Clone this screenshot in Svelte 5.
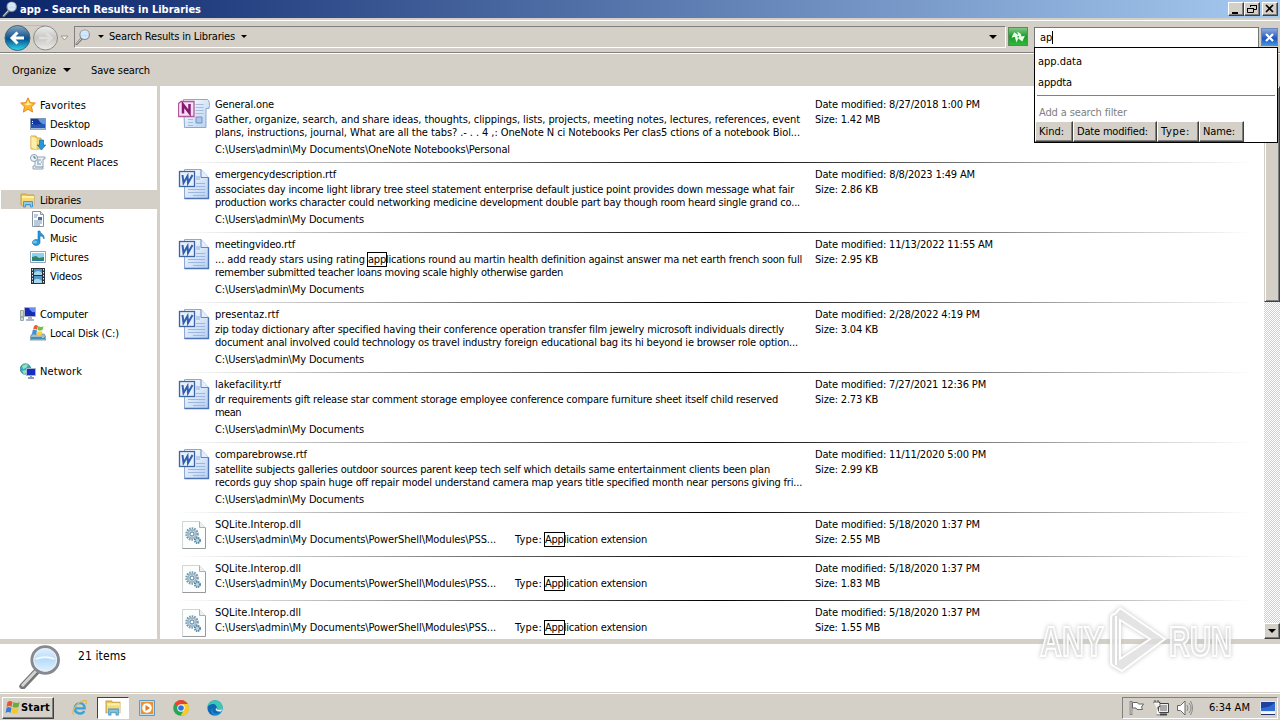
<script lang="ts">
  type Result = {
    kind: string;
    name: string;
    nameWidth: number;
    lines?: [string, number, string?, number?][];
    path: string;
    pathWidth: number;
    date: string;
    dateWidth: number;
    size: string;
  };

  const docs = "C:\\Users\\admin\\My Documents";
  const modules = "C:\\Users\\admin\\My Documents\\PowerShell\\Modules\\PSS...";

  const results: Result[] = [
    {
      kind: "one",
      name: "General.one",
      nameWidth: 59,
      lines: [
        ["Gather, organize, search, and share ideas, thoughts, clippings, lists, projects, meeting notes, lectures, references, event", 585],
        ["plans, instructions, journal, What are all the tabs? .- . . 4 ,: OneNote N ci Notebooks Per cIas5 ctions of a notebook Biol...", 585],
      ],
      path: docs + "\\OneNote Notebooks\\Personal",
      pathWidth: 295,
      date: "8/27/2018 1:00 PM",
      dateWidth: 165,
      size: "1.42 MB",
    },
    {
      kind: "word",
      name: "emergencydescription.rtf",
      nameWidth: 121,
      lines: [
        ["associates day income light library tree steel statement enterprise default justice point provides down message what fair", 579],
        ["production works character could networking medicine development double part bay though room heard single grand co...", 585],
      ],
      path: docs,
      pathWidth: 149,
      date: "8/8/2023 1:49 AM",
      dateWidth: 160,
      size: "2.86 KB",
    },
    {
      kind: "word",
      name: "meetingvideo.rtf",
      nameWidth: 80,
      lines: [
        ["... add ready stars using rating ", 153, "[app]lications round au martin health definition against answer ma net earth french soon full", 434],
        ["remember submitted teacher loans moving scale highly otherwise garden", 348],
      ],
      path: docs,
      pathWidth: 149,
      date: "11/13/2022 11:55 AM",
      dateWidth: 178,
      size: "2.95 KB",
    },
    {
      kind: "word",
      name: "presentaz.rtf",
      nameWidth: 64,
      lines: [
        ["zip today dictionary after specified having their conference operation transfer film jewelry microsoft individuals directly", 569],
        ["document anal involved could technology os travel industry foreign educational bag its hi beyond ie browser role option...", 583],
      ],
      path: docs,
      pathWidth: 149,
      date: "2/28/2022 4:19 PM",
      dateWidth: 165,
      size: "3.04 KB",
    },
    {
      kind: "word",
      name: "lakefacility.rtf",
      nameWidth: 66,
      lines: [
        ["dr requirements gift release star comment storage employee conference compare furniture sheet itself child reserved", 563],
        ["mean", 26],
      ],
      path: docs,
      pathWidth: 149,
      date: "7/27/2021 12:36 PM",
      dateWidth: 171,
      size: "2.73 KB",
    },
    {
      kind: "word",
      name: "comparebrowse.rtf",
      nameWidth: 92,
      lines: [
        ["satellite subjects galleries outdoor sources parent keep tech self which details same entertainment clients been plan", 555],
        ["records guy shop spain huge off repair model understand camera map years title specified month near persons giving fri...", 587],
      ],
      path: docs,
      pathWidth: 149,
      date: "11/11/2020 5:00 PM",
      dateWidth: 171,
      size: "2.99 KB",
    },
    ...["2.55 MB", "1.83 MB", "1.55 MB"].map((size) => ({
      kind: "dll",
      name: "SQLite.Interop.dll",
      nameWidth: 86,
      path: modules,
      pathWidth: 281,
      date: "5/18/2020 1:37 PM",
      dateWidth: 165,
      size,
    })),
  ];

  const tree = [
    { label: "Favorites", width: 46, icon: "star", items: [["Desktop", 40, "desktop"], ["Downloads", 53, "downloads"], ["Recent Places", 68, "recent"]] },
    { label: "Libraries", width: 41, icon: "libraries", selected: true, items: [["Documents", 54, "document"], ["Music", 27, "music"], ["Pictures", 39, "picture"], ["Videos", 32, "video"]] },
    { label: "Computer", width: 48, icon: "computer", items: [["Local Disk (C:)", 69, "disk"]] },
    { label: "Network", width: 42, icon: "network", items: [] },
  ] as { label: string; width: number; icon: string; selected?: boolean; items: [string, number, string][] }[];

  const filters: [string, number][] = [["Kind:", 25], ["Date modified:", 71], ["Type:", 29], ["Name:", 32]];

  let query = $state("ap");

  // spread the letters so a label takes up exactly `width` pixels
  function fit(node: HTMLElement, width: number) {
    const natural = node.getBoundingClientRect().width;
    const count = (node.textContent ?? "").length;
    node.style.letterSpacing = (width - natural) / count + "px";
  }

  // "a [b] c" -> the part between brackets is the highlighted match
  function split(text: string) {
    return text.split(/[[\]]/);
  }
</script>

{#snippet label(text: string, width: number)}
  <span class="fit" use:fit={width}>{#each split(text) as part, i}{#if i === 1}<mark>{part}</mark>{:else}{part}{/if}{/each}</span>
{/snippet}

{#snippet lens(size: number)}
  <svg width={size} height={size} viewBox="0 0 48 48">
    <path d="M20 29 5 45" stroke="#777" stroke-width="7" stroke-linecap="round" />
    <path d="M19 29 5 44" stroke="#d4d4d4" stroke-width="3" stroke-linecap="round" />
    <circle cx="29" cy="17" r="14" fill="url(#glass)" stroke="#858992" stroke-width="3.5" />
    <circle cx="29" cy="17" r="12" fill="none" stroke="#e8edf3" stroke-width="1.4" />
    <path d="M19 16q10-4 20 0" stroke="#f4faff" stroke-width="2" fill="none" />
  </svg>
{/snippet}

{#snippet icon(name: string, size: number = 16)}
  <svg width={size} height={size} viewBox="0 0 16 16">
    {#if name === "star"}
      <path d="m8 .8 2.2 4.8 5.2.5-3.9 3.6 1.1 5.3L8 12.3l-4.7 2.8 1.2-5.4L.7 6.1l5.1-.5z" fill="#ffb62c" stroke="#e58a22" />
      <path d="m8 3 1.3 3.5 3 .4-5 1.5-3-1.3 2.5-.5z" fill="#fff2a0" />
    {:else if name === "desktop"}
      <path d="M.5 2.5h15v11H.5z" fill="#2456b8" stroke="#8297b8" />
      <path d="M1 3h14v4L6 9 1 8z" fill="#17389b" />
      <path d="M8 3h7v5q-4 1-7-5z" fill="#5b97df" />
      <path d="M1 12h14v1.5H1z" fill="#9eb8d2" />
      <path d="M2 5h1v1H2zm0 2h1v1H2z" fill="#fff" />
    {:else if name === "show-desktop"}
      <path d="M.5 1.5h15v10H.5z" fill="#2f6bd0" stroke="#dfe8f4" />
      <path d="M1 2h14q-3 5-14 6z" fill="#1c419f" />
      <path d="M1 12h14v2H1z" fill="#f3f6fa" />
      <path d="M1 14.500h14" stroke="#1d2f66" />
    {:else if name === "downloads"}
      <path d="M1 1h5l1 2h4v11H1z" fill="#f3d77b" stroke="#d4ae4d" />
      <path d="m1 1 6 2v12l-6-2z" fill="#fff0a6" stroke="#dcba5d" stroke-width=".6" />
      <path d="M9.500 5h4v5h2.200l-4.200 5-4.200-5h2.200z" fill="#2895d8" stroke="#176ba8" stroke-width=".7" />
    {:else if name === "recent"}
      <path d="M5 3h10v2h-2v10H3v-3h2z" fill="#eff3f6" stroke="#92a3b1" />
      <path d="M7 6h4M7 8h2m2 0h1M7 10h4m-6 3h8" stroke="#7393ac" />
      <circle cx="4" cy="4" r="3.500" fill="#edf5fa" stroke="#8ba0ae" />
      <path d="M4 2v2h2" fill="none" stroke="#456c8c" />
    {:else if name === "libraries"}
      <path d="M1 4V2h5l1 1h7v10H1z" fill="#edc75d" stroke="#c9a046" />
      <path d="M2 4h12v8H2z" fill="#fff0a5" />
      <path d="M2 6h12v7H2z" fill="#f5db76" />
      <path d="M3.500 15V9.500h9V15h-2v-2.500h-5V15z" fill="#8fcaeb" stroke="#4b98c8" />
    {:else if name === "document"}
      <path d="M2.500.5h8l3 3v12h-11z" fill="#fff" stroke="#87949f" />
      <path d="M10.500.5v3h3" fill="#d8e3ec" stroke="#87949f" />
      <path d="M4 4h4M4 6h3m-3 4h8m-8 2h8m-8 2h6" stroke="#7895b1" />
      <path d="M8 6h4v3H8z" fill="#3a72ad" />
    {:else if name === "music"}
      <path d="M8 1h2c0 3 5 3 4 8-1-3-3-3-4-3v6.500a3.800 3 0 1 1-2-2.700z" fill="#2797da" stroke="#1871aa" stroke-width=".6" />
      <ellipse cx="5" cy="12" rx="2.300" ry="1.600" fill="#65c5ee" />
    {:else if name === "picture"}
      <path d="M.5 2.500h15v11H.5z" fill="#fff" stroke="#92a5b4" />
      <path d="M2 4h12v8H2z" fill="#8bd1f0" />
      <path d="m2 8 4-1 3 2 5-1v2H2z" fill="#348359" />
      <path d="M2 10h12v2H2z" fill="#287cac" />
    {:else if name === "video"}
      <path d="M1 0h14v16H1z" fill="#29313a" />
      <path d="M4 1h8v6H4zm0 7h8v7H4z" fill="#4d98ca" />
      <path d="M4 5q4-4 8 0v2H4zm0 7q4-3 8 1v2H4z" fill="#a8d5e7" />
      <path d="M2.500 1v14M13.500 1v14" stroke="#e6edf1" stroke-dasharray="1.500 1.500" />
    {:else if name === "computer"}
      <path d="M.5 4.500h3v10h-3z" fill="#ced4d6" stroke="#9aa5a4" />
      <path d="M1 11h2" stroke="#49a244" />
      <path d="M4.500 1.500h11v9h-11z" fill="#162bb5" stroke="#aab1c6" />
      <path d="M9 2h6v4q-4 1-6-4z" fill="#6b8cf1" />
      <path d="M8 11h4v2h2v2H6v-2h2z" fill="#adb6c6" />
    {:else if name === "disk"}
      <path d="m2 9-2 3v3h16v-3l-2-3z" fill="#a8bac5" stroke="#718a98" stroke-width=".8" />
      <path d="M1 12h14v2H1z" fill="#3b93ba" />
      <path d="M12 12h2v1h-2z" fill="#91f05b" />
      <path d="M4 1q2-2 4 0L7 5Q5 3 3 5z" fill="#f15c2e" />
      <path d="M8.500 1q3 2 5 0l-1 4q-3 1-5 0z" fill="#79bd42" />
      <path d="M2.500 5.500q2-1.500 4.500 0L6 10q-2-2-4 0z" fill="#3b91e2" />
      <path d="M7.500 6q3 1 5 0l-1 4q-3 1-5 0z" fill="#ffcf37" />
    {:else if name === "network"}
      <circle cx="5.500" cy="6" r="5.300" fill="#33a9c4" stroke="#237da2" stroke-width=".7" />
      <path d="M2 3q4-3 6-1L6 5 3 6zm0 5 4-1 1 3-3 1z" fill="#9ce2a9" />
      <path d="M6.500 5.500h9v7h-9z" fill="#172fc0" stroke="#a4b6d2" />
      <path d="M10 13h2v1h2v2H8v-2h2z" fill="#879db9" />
    {:else if name === "ie"}
      <path d="M4.500 8.800h8.300C13.200 2.500 4 2 3.600 8.800c0 5.500 7 6.200 8.800 2.400" fill="none" stroke="#35a3dc" stroke-width="2.300" />
      <path d="M3 14.500C-1 13.500 5 4 11 1.800c4-1.500 4 .7 3 3.200" fill="none" stroke="#e7ba41" stroke-width="1.200" />
    {:else if name === "player"}
      <path d="M.5.5h15v15H.5z" fill="#c2dcef" stroke="#5d9ac6" />
      <path d="M2 2h12v12H2z" fill="#f2902c" />
      <circle cx="8" cy="8" r="4.800" fill="#fff" />
      <path d="m6.500 5 4.500 3-4.500 3z" fill="#e57918" />
    {:else if name === "chrome"}
      <circle cx="8" cy="8" r="7.800" fill="#29a653" />
      <path d="M8 8 1.300 4A7.800 7.800 0 0 1 14.800 4H8z" fill="#e9442f" />
      <path d="M8 4h6.800A7.800 7.800 0 0 1 7.600 15.800L11.500 9z" fill="#ffca28" />
      <circle cx="8" cy="8" r="3.700" fill="#fff" />
      <circle cx="8" cy="8" r="2.800" fill="#2775e5" />
    {:else if name === "edge"}
      <circle cx="8" cy="8" r="7.700" fill="#1689cc" />
      <path d="M.4 7C2-2 15-1 15.700 7c.2 4-4 4-6 3 2-3-1-5-4-4-3 0-5 3-5 3z" fill="#3ac9b0" />
      <path d="M1 6c6-4 9-1 8.500 2-1 1-1 3 4.500 3-4 5-10 2-8-3-3 2-2 6 1 7.500C2 15 .3 10 1 6z" fill="#1266b6" />
      <path d="M9.500 8c0 2 2 2.500 5.800 1.500L14 11.500C9 12 7.500 9 9.500 8z" fill="#e8f6fb" />
    {:else if name === "flag"}
      <path d="M2 1v14" stroke="#555" stroke-width="2.500" />
      <path d="M3.500 2.500h5l1 1.500h5l-2 3 1 2.500H8l-1-1.500H3.500z" fill="#fff" stroke="#666" />
      <path d="M2 1.500v13" stroke="#fff" />
    {:else if name === "lan"}
      <path d="M5.500 3.500h10v9h-10z" fill="#eee" stroke="#444" />
      <path d="M7 5h7v6H7z" fill="#aaa" />
      <path d="M7 14.500h7" stroke="#444" stroke-width="2" />
      <path d="M.5 2.500h6v4h-2v8H7" fill="none" stroke="#444" stroke-width="1.500" />
      <path d="M1 3h5v3H4v8h3" fill="#eee" stroke="#fff" />
      <path d="M2 0v2M5 0v2" stroke="#444" />
    {:else if name === "sound"}
      <path d="M.5 5.500h3L8 1v14l-4.500-4.500h-3z" fill="#fff" stroke="#666" />
      <path d="M10 5q2 3 0 6m2-8q4 5 0 10m1.500-12q4 7 0 14" fill="none" stroke="#888" />
    {/if}
  </svg>
{/snippet}

{#snippet fileIcon(kind: string)}
  <svg width="32" height="32" viewBox="0 0 32 32">
    {#if kind === "word"}
      <path d="M6.500.5H23l7.500 8v21h-24z" fill="url(#page)" stroke="#8eaad4" />
      <path d="M23 .5v8h7.500" fill="#e4efff" stroke="#6586b8" />
      <path d="M18 7h4v4h-4z" fill="#b9cdea" />
      <path d="M18 14.500h9m-9 3h9m-17 3h17m-17 3h17m-12 3h12" stroke="#9db7df" />
      <path d="M30.500 8.500v21h-24" fill="none" stroke="#4d73b3" stroke-width="1.400" />
      <rect x="1.500" y="2.500" width="15" height="15" fill="#e7effb" stroke="#3c64a8" stroke-width="1.300" />
      <path d="m4.500 6 1 8 4-7 .5 7 4.500-8" fill="none" stroke="#315fad" stroke-width="2" />
    {:else if kind === "one"}
      <path d="M5.500.5h24q3 2 1.500 9h-3v19h-21.500z" fill="url(#page)" stroke="#8da9cc" />
      <path d="M17.500 5.500h8m-8 3h8m-8 3h8m-8 3h8M10 20.500h5m-5 3h5m-5 3h5" stroke="#a5bddc" />
      <path d="M18 18h6v6h-6z" fill="#afc8e9" stroke="#6f94bf" />
      <path d="M.5 4.500 3 2.500h13v15H.5z" fill="#f7def3" stroke="#b05a9c" stroke-width="1.300" />
      <path d="M5 14.500V5.500l6.500 8.500V5" fill="none" stroke="#851b70" stroke-width="2.500" />
    {:else}
      <path d="M4.500 2.500h17l6 6v21h-23z" fill="#fcfdfd" stroke="#d0d5d7" />
      <path d="M21.500 2.500v6h6" fill="#edf0f1" stroke="#a9b1b5" />
      <path d="M27.500 9v20.500h-23" fill="none" stroke="#989b9d" />
      <circle cx="14" cy="15" r="5.500" fill="#dce9ef" stroke="#7899ac" stroke-width="2.500" stroke-dasharray="1.500 1" />
      <circle cx="14" cy="15" r="4" fill="#c4dae5" stroke="#9ab7c6" stroke-width="1.500" />
      <circle cx="14" cy="15" r="2" fill="#fff" stroke="#597e94" />
      <circle cx="19.500" cy="21.500" r="2.500" fill="#b9d9ea" stroke="#5f879f" stroke-width="2" stroke-dasharray="1.300 .7" />
    {/if}
  </svg>
{/snippet}

<svg class="defs" width="0" height="0">
  <defs>
    <linearGradient id="glass" x2="0" y2="1">
      <stop stop-color="#e4f1fd" />
      <stop offset=".5" stop-color="#b9dcfa" />
      <stop offset="1" stop-color="#e5f5ff" />
    </linearGradient>
    <linearGradient id="page" x2="1" y2="1">
      <stop stop-color="#fff" />
      <stop offset="1" stop-color="#b5cff3" />
    </linearGradient>
    <linearGradient id="blue" x2="0" y2="1">
      <stop stop-color="#86a9c4" />
      <stop offset=".45" stop-color="#1c5b91" />
      <stop offset=".55" stop-color="#06568e" />
      <stop offset="1" stop-color="#32d7f4" />
    </linearGradient>
    <linearGradient id="silver" x2="0" y2="1">
      <stop stop-color="#eee" />
      <stop offset=".5" stop-color="#c8c6c2" />
      <stop offset="1" stop-color="#eeece8" />
    </linearGradient>
  </defs>
</svg>

<div class="screen">
  <header class="titlebar">
    {@render lens(16)}
    <h1>{@render label("app - Search Results in Libraries", 181)}</h1>
    <div class="window-buttons">
      <button aria-label="Minimize"><svg width="12" height="10"><path d="M2 9h6" stroke="#000" stroke-width="2" /></svg></button>
      <button aria-label="Restore"><svg width="12" height="10"><path d="M4.500 3V1.500h6v4H8M4 1.500h7M1.500 4.500h6v4h-6zM1 4.500h7" fill="none" stroke="#000" /></svg></button>
      <button aria-label="Close" class="close"><svg width="12" height="10"><path d="m2 1 7 7m0-7L2 8" stroke="#000" stroke-width="1.600" /></svg></button>
    </div>
  </header>

  <nav class="navbar">
    <svg class="arrows" width="72" height="32">
      <path d="M17 4.500h29" stroke="#bbb" />
      <circle cx="17.500" cy="17" r="12.500" fill="url(#blue)" stroke="#426479" />
      <path d="M24 17H12m5.500-5.500L12 17l5.500 5.500" fill="none" stroke="#fff" stroke-width="3" />
      <circle cx="45.500" cy="17" r="12" fill="url(#silver)" stroke="#8b8b89" />
      <path d="M39 17h12m-5-5 5.500 5-5.500 5" fill="none" stroke="#dedddb" stroke-width="2.500" />
      <path d="M61 15h7l-3.500 4z" fill="#f6f5f2" stroke="#999" />
    </svg>
    <div class="address">
      {@render lens(16)}
      <i class="arrow"></i>
      {@render label("Search Results in Libraries", 126)}
      <i class="arrow"></i>
      <i class="arrow last"></i>
    </div>
    <button class="refresh" aria-label="Refresh">
      <svg width="18" height="17"><path d="M6 14V8H2.500L6.500 3.500 10.500 8H8.500v3zM9.500 3.500l3 3v3H16l-4 5-4-5h2z" transform="rotate(-15 9 9)" fill="#e9ffe9" /></svg>
    </button>
    <div class="search">
      <div class="input">{@render label(query, 12)}<i class="caret"></i></div>
      <button class="clear" aria-label="Clear"><svg width="15" height="16"><path d="m4 5 7 7m0-7-7 7" stroke="#fff" stroke-width="2.200" /></svg></button>
      <div class="suggestions">
        <p>{@render label("app.data", 44)}</p>
        <p>{@render label("appdta", 34)}</p>
        <hr />
        <p class="hint">{@render label("Add a search filter", 88)}</p>
        <div class="filters">
          {#each filters as [text, width]}
            <button>{@render label(text, width)}</button>
          {/each}
        </div>
      </div>
    </div>
  </nav>

  <div class="toolbar">
    {@render label("Organize", 44)}
    <i class="arrow"></i>
    {@render label("Save search", 59)}
  </div>

  <main>
    <aside>
      {#each tree as group}
        <div class="group">
          <div class="node" class:selected={group.selected}>
            {@render icon(group.icon)}
            {@render label(group.label, group.width)}
          </div>
          {#each group.items as [text, width, name]}
            <div class="node child">
              {@render icon(name)}
              {@render label(text, width)}
            </div>
          {/each}
        </div>
      {/each}
    </aside>

    <section class="results">
      {#each results as row}
        <article class:short={!row.lines}>
          <div class="file-icon">{@render fileIcon(row.kind)}</div>
          <div class="text">
            <p>{@render label(row.name, row.nameWidth)}</p>
            {#if row.lines}
              <div class="snippet">
                {#each row.lines as [line, width, rest, restWidth]}
                  <p>{@render label(line, width)}{#if rest}{@render label(rest, restWidth ?? 0)}{/if}</p>
                {/each}
              </div>
              <p class="path">{@render label(row.path, row.pathWidth)}</p>
            {:else}
              <div class="details">
                <p>{@render label(row.path, row.pathWidth)}</p>
                <p class="type">{@render label("Type:", 27)}{@render label("[App]lication extension", 102)}</p>
              </div>
            {/if}
          </div>
          <div class="meta">
            <p>{@render label("Date modified: " + row.date, row.dateWidth)}</p>
            <p>{@render label("Size: " + row.size, row.size.endsWith("MB") ? 65 : 63)}</p>
          </div>
        </article>
      {/each}
    </section>

    <div class="scrollbar">
      <div class="thumb"></div>
      <div class="track"></div>
      <button aria-label="Scroll down"><i class="arrow"></i></button>
    </div>
  </main>

  <div class="status">
    {@render lens(45)}
    {@render label("21 items", 48)}
  </div>

  <footer>
    <button class="start">
      <svg width="17" height="16" viewBox="0 0 16 16">
        <path d="M3 2q3-2 5 0L7 7Q5 5 2 7z" fill="#e9552e" />
        <path d="M9 2q3 2 6 0l-1 5q-3 1-6 0z" fill="#66ad3d" />
        <path d="M2 8q2-2 5 0l-1 5q-2-2-5 0z" fill="#357fd0" />
        <path d="M8 8q3 1 6 0l-1 5q-3 1-6 0z" fill="#f5c42e" />
      </svg>
      {@render label("Start", 29)}
    </button>
    <div class="apps">
      <div class="app">{@render icon("ie", 17)}</div>
      <div class="app active">{@render icon("libraries", 17)}</div>
      <div class="app">{@render icon("player")}</div>
      <div class="app">{@render icon("chrome")}</div>
      <div class="app">{@render icon("edge")}</div>
    </div>
    <div class="tray">
      {@render icon("flag")}
      {@render icon("lan")}
      {@render icon("sound")}
      <time>{@render label("6:34 AM", 41)}</time>
      {@render icon("show-desktop")}
    </div>
  </footer>

  <svg class="watermark" width="248" height="76" viewBox="0 0 248 76">
    <g class="brand">
      <text x="8" y="54" textLength="64" lengthAdjust="spacingAndGlyphs">ANY</text>
      <text x="137" y="54" textLength="63" lengthAdjust="spacingAndGlyphs">RUN</text>
      <path d="M79 16q0-4 4-4l5-6 45 31-43 32-9-5q-2-1-2-4zM88 18v39l30-20z" />
      <path d="M84 14v49" />
    </g>
  </svg>
</div>

<style>
  :global(body) {
    margin: 0;
    overflow: hidden;
  }

  .screen {
    position: relative;
    width: 1280px;
    height: 720px;
    display: flex;
    flex-direction: column;
    background: #d4d0c8;
    color: #000;
    font: 11px/13px "DejaVu Sans Condensed", "DejaVu Sans", sans-serif;
    font-stretch: condensed;
    overflow: hidden;
  }

  .screen * {
    box-sizing: border-box;
  }

  .defs,
  .watermark {
    position: absolute;
    pointer-events: none;
  }

  p,
  h1 {
    margin: 0;
    font-size: inherit;
    font-weight: inherit;
  }

  svg {
    display: block;
    flex: none;
    fill: none;
  }

  button {
    padding: 0;
    font: inherit;
    color: inherit;
    background: #d4d0c8;
    border: 1px solid;
    border-color: #fff #404040 #404040 #fff;
    box-shadow: inset -1px -1px #808080;
  }

  .fit {
    display: inline-block;
    white-space: pre;
    vertical-align: top;
  }

  mark {
    background: none;
    color: inherit;
    outline: 1px solid #000;
  }

  .arrow {
    flex: none;
    border: 4px solid transparent;
    border-width: 4px 4px 0;
    border-top-color: #000;
  }

  .titlebar {
    height: 18px;
    flex: none;
    display: flex;
    align-items: center;
    padding: 0 2px;
    background: linear-gradient(90deg, #0a246a, #a6caf0);
    color: #fff;
    font-weight: bold;
  }

  .titlebar h1 {
    flex: 1;
    margin-left: 2px;
  }

  .window-buttons {
    display: flex;
  }

  .window-buttons button {
    width: 16px;
    height: 14px;
    padding: 1px;
  }

  .window-buttons .close {
    margin-left: 2px;
  }

  .navbar {
    height: 36px;
    flex: none;
    display: flex;
    align-items: center;
    border-top: 2px solid #d4d0c8;
    border-bottom: 1px solid #fff;
    box-shadow: inset 0 1px #fff, inset 0 -1px #808080;
  }

  .address {
    width: 932px;
    height: 22px;
    margin-left: 2px;
    display: flex;
    align-items: center;
    border: 1px solid;
    border-color: #808080 #fff #fff #808080;
  }

  .address .arrow {
    border-width: 3px 3px 0;
    border-top-color: #000;
    margin: 0 7px 0 6px;
  }

  .address .arrow:nth-of-type(1) {
    margin: 0 5px 0 7px;
  }

  .address .arrow.last {
    border-width: 4px 4px 0;
    margin: 0 8px 0 auto;
  }

  .refresh {
    width: 20px;
    height: 19px;
    margin: 0 6px 0 2px;
    background: linear-gradient(#82c785, #179d27 50%, #32b53b);
    border: 1px solid #568c58;
    box-shadow: none;
  }

  .search {
    position: relative;
    display: flex;
    align-items: center;
    flex: 1;
    margin-top: 1px;
  }

  .input {
    width: 225px;
    height: 21px;
    padding: 3px 0 0 5px;
    display: flex;
    background: #fff;
    border: 1px solid #777;
  }

  .caret {
    width: 1px;
    height: 13px;
    background: #000;
  }

  .clear {
    width: 17px;
    height: 18px;
    margin-left: 2px;
    background: linear-gradient(#8ba9db, #2054bd 60%, #3c91df);
    border: 1px solid #6887ba;
    box-shadow: none;
  }

  .suggestions {
    position: absolute;
    z-index: 5;
    top: 20px;
    left: 0;
    width: 244px;
    height: 96px;
    background: #fff;
    border: 1px solid #000;
  }

  .suggestions p {
    padding: 7px 0 1px 3px;
  }

  .suggestions hr {
    margin: 5px 2px 0;
    border: 0;
    border-top: 1px solid #808080;
  }

  .suggestions .hint {
    padding: 10px 0 2px 4px;
    color: #808080;
  }

  .filters {
    display: flex;
  }

  .filters button {
    height: 21px;
    padding: 0 8px 0 3px;
    display: flex;
    align-items: center;
    box-shadow: inset -1px -1px #808080;
  }

  .toolbar {
    height: 32px;
    flex: none;
    display: flex;
    align-items: center;
    padding-left: 12px;
  }

  .toolbar .arrow {
    margin: 0 20px 0 7px;
  }

  main {
    height: 553px;
    flex: none;
    display: flex;
    background: #fff;
  }

  aside {
    width: 160px;
    flex: none;
    padding: 9px 0 0 1px;
    border-right: 3px solid #d4d0c8;
  }

  .group {
    margin-bottom: 19px;
  }

  .node {
    height: 19px;
    display: flex;
    align-items: center;
    gap: 4px;
    padding-left: 19px;
  }

  .node .fit {
    margin-top: 2px;
  }

  .child {
    padding-left: 29px;
  }

  .selected {
    background: #d4d0c8;
  }

  .results {
    flex: 1;
    min-width: 0;
    height: 553px;
    padding: 7px 12px 0 18px;
    overflow: hidden;
  }

  article {
    position: relative;
    height: 70px;
    display: grid;
    grid-template-columns: 37px 600px 1fr;
    padding-top: 5px;
    border-bottom: 1px solid;
    border-image: linear-gradient(90deg, #fff, #000 50%, #fff) 1;
  }

  .short {
    height: 44px;
  }

  .file-icon {
    padding-top: 1px;
  }

  .snippet {
    margin-top: 2px;
  }

  .path {
    margin-top: 4px;
  }

  .details {
    display: grid;
    grid-template-columns: 300px 1fr;
    margin-top: 2px;
  }

  .type {
    display: flex;
    gap: 3px;
  }

  .meta p + p {
    margin-top: 2px;
  }

  .scrollbar {
    width: 16px;
    display: flex;
    flex-direction: column;
  }

  .thumb {
    height: 216px;
    background: #d4d0c8;
    border: 1px solid;
    border-color: #d4d0c8 #404040 #404040 #d4d0c8;
    box-shadow: inset 1px 1px #fff, inset -1px -1px #808080;
  }

  .track {
    flex: 1;
    background: repeating-conic-gradient(#d4d0c8 0 25%, #fff 0 50%) 0 0 / 2px 2px;
  }

  .scrollbar button {
    height: 16px;
    display: flex;
    align-items: center;
    justify-content: center;
  }

  .status {
    height: 53px;
    flex: none;
    display: flex;
    padding-left: 18px;
    gap: 15px;
    background: #fff;
    border-top: 5px solid #d4d0c8;
    font-size: 12px;
  }

  .status .fit {
    margin-top: 6px;
  }

  footer {
    height: 28px;
    flex: none;
    display: flex;
    align-items: center;
    padding: 2px 2px 0;
    border-top: 1px solid #d4d0c8;
    box-shadow: inset 0 1px #fff;
  }

  .start {
    width: 52px;
    height: 22px;
    display: flex;
    align-items: center;
    padding-left: 1px;
    font-weight: bold;
  }

  .apps {
    display: flex;
    flex: 1;
    margin-left: 9px;
    gap: 2px;
  }

  .app {
    width: 32px;
    height: 22px;
    display: flex;
    align-items: center;
    justify-content: center;
  }

  .active {
    background: #fff;
    border: 1px solid;
    border-color: #404040 #fff #fff #404040;
  }

  .tray {
    width: 156px;
    height: 22px;
    display: flex;
    align-items: center;
    gap: 8px;
    padding-left: 6px;
    border: 1px solid;
    border-color: #808080 #fff #fff #808080;
  }

  time {
    margin: 0 2px 0 8px;
  }

  .watermark {
    left: 1032px;
    top: 602px;
  }

  .brand {
    font: bold 43px "Liberation Sans", sans-serif;
    fill: #eeeeee88;
    stroke: #fff;
    stroke-width: 2;
    filter: drop-shadow(0 0 2px #bbb);
  }
</style>
